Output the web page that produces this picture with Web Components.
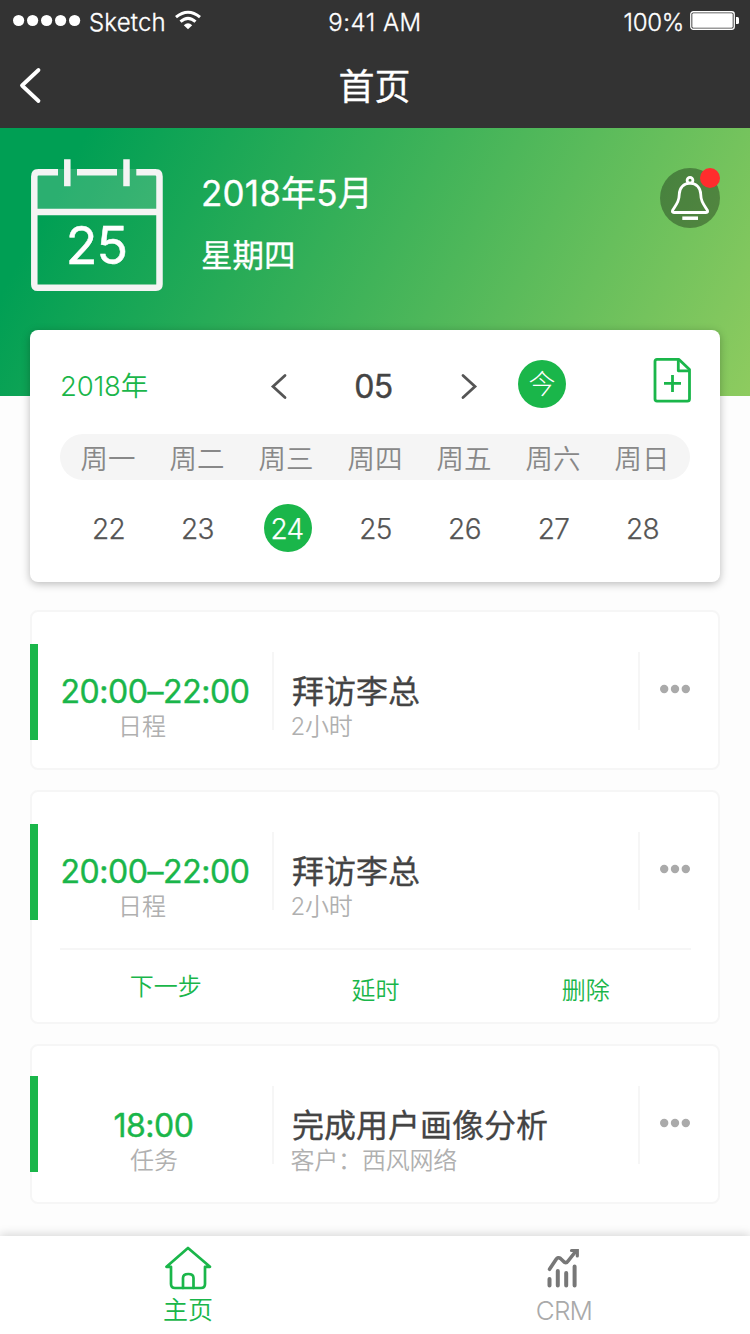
<!DOCTYPE html>
<html lang="zh-CN">
<head>
<meta charset="utf-8">
<title>首页</title>
<style>
  html, body { margin: 0; padding: 0; }
  body {
    width: 750px; height: 1334px; overflow: hidden; background: #fdfdfd;
    font-family: Inter, "Noto Sans CJK SC", sans-serif;
    font-feature-settings: "calt" 0;
    --green: #1ab64a; --line: #f6f6f6;
  }
</style>
</head>
<body>
<home-screen></home-screen>
<script>
const define = (name, html) => {
  const t = document.createElement('template');
  t.innerHTML = html;
  customElements.define(name, class extends HTMLElement {
    constructor() {
      super();
      this.attachShadow({ mode: 'open' }).append(t.content.cloneNode(true));
    }
  });
};

define('status-bar', `
<style>
  :host { display: grid; grid-template-columns: 1fr auto 1fr; height: 40px; background: #333; color: #fff; font-size: 24px; line-height: 46px; white-space: nowrap; font-weight: 300; -webkit-text-stroke: .3px; }
  .l { display: flex; padding-left: 13px; }
  .r { display: flex; justify-content: flex-end; padding-right: 11px; }
  svg { display: block; flex: none; }
  .dots { margin: 14px 8px 0 0; }
  .wifi { margin: 10px 0 0 9px; }
  .bat { margin: 11px 0 0 6px; }
  .name { letter-spacing: .2px; }
  .time { letter-spacing: .5px; }
  .pct { letter-spacing: -.3px; }
</style>
<div class="l">
  <svg class="dots" width="68" height="13" fill="#fff"><circle cx="5.600" cy="6.500" r="5.600"/><circle cx="19.600" cy="6.500" r="5.600"/><circle cx="33.600" cy="6.500" r="5.600"/><circle cx="47.600" cy="6.500" r="5.600"/><circle cx="61.600" cy="6.500" r="5.600"/></svg>
  <span class="name">Sketch</span>
  <svg class="wifi" width="27" height="20" fill="none" stroke="#fff" stroke-width="3"><path d="M1 7.200Q13 -2.800 25 7.200"/><path d="M5.500 11.700Q13 5 20.500 11.700"/><path d="M8.800 15.300Q13 11.300 17.200 15.300L13 19.200Z" fill="#fff" stroke="none"/></svg>
</div>
<span class="time">9:41 AM</span>
<div class="r">
  <span class="pct">100%</span>
  <svg class="bat" width="49" height="19"><rect x=".75" y=".75" width="43.500" height="17.500" rx="2.500" fill="none" stroke="#fff" stroke-width="1.300"/><rect x="2.300" y="2.300" width="40.400" height="14.400" rx="1.200" fill="#fff"/><path d="M46 6h1.500q1.500 0 1.500 1.500v4q0 1.500-1.500 1.500h-1.500z" fill="#fff"/></svg>
</div>`);

define('nav-bar', `
<style>
  :host { display: grid; grid-template-columns: 60px 1fr 60px; height: 88px; background: #333; color: #fff; }
  svg { display: block; margin: 27px 0 0 19px; }
  h1 { margin: 0 0 0 -1px; font-size: 36px; font-weight: 400; -webkit-text-stroke: .3px; line-height: 94px; height: 88px; text-align: center; }
</style>
<svg width="24" height="38" fill="none" stroke="#fff" stroke-width="3.800" stroke-linecap="round" stroke-linejoin="round"><path d="M19.500 3 3 18.500 19.500 34"/></svg>
<h1><slot></slot></h1>`);

define('date-hero', `
<style>
  :host { display: flex; box-sizing: border-box; height: 268px; padding: 31px 30px 0; color: #fff;
    background: linear-gradient(118deg, #009f54 10%, #8ecb5f 100%); }
  .cal { display: grid; width: 134px; height: 133px; }
  .cal > * { grid-area: 1 / 1; }
  .day { font-size: 52px; font-weight: 400; -webkit-text-stroke: .5px; line-height: 64px; padding: 55px 1px 0 0; text-align: center; letter-spacing: -1px; }
  .txt { margin-left: 37px; flex: 1; font-weight: 400; -webkit-text-stroke: .3px; white-space: nowrap; }
  .m { font-size: 35px; line-height: 44px; margin-top: 12px; letter-spacing: .2px; }
  .w { font-size: 31.500px; line-height: 40px; margin-top: 21px; }
  .bell { margin-top: 9px; }
</style>
<div class="cal">
  <svg width="134" height="133" fill="none" stroke="#f4f4f4" stroke-width="6.500"><path d="M4 10h126v43H4z" fill="#fff" fill-opacity=".17" stroke="none"/><path d="M28 13.300H8.500Q4.300 13.300 4.300 17.500V125.500Q4.300 128.800 7.600 128.800H126Q129.500 128.800 129.500 125.300V17.500Q129.500 13.300 125.300 13.300H106.300M47 13.300h40M4.300 53h125M37.300.200v27M96.500.200v27"/></svg>
  <div class="day">25</div>
</div>
<div class="txt"><div class="m">2018年5月</div><div class="w">星期四</div></div>
<svg class="bell" width="60" height="60" fill="none" stroke="#fff" stroke-width="2.800" stroke-linejoin="round"><circle cx="30" cy="30" r="30" fill="#000" fill-opacity=".32" stroke="none"/><circle cx="30" cy="12.300" r="2.900"/><path d="M30 15.200C23.500 15.200 19.500 20 19.300 26C19.100 33 17 35.500 12.800 42Q11.500 44.500 14 44.500H46Q48.500 44.500 47.200 42C43 35.500 40.900 33 40.700 26C40.500 20 36.500 15.200 30 15.200Z"/><path d="M22.300 50.200h15.700" stroke-width="3.500"/><circle cx="50" cy="10" r="10" fill="#ff2d2d" stroke="none"/></svg>`);

define('week-calendar', `
<style>
  :host { display: block; box-sizing: border-box; height: 252px; margin: -66px 30px 0; background: #fff; border-radius: 8px; box-shadow: 0 2px 9px rgba(0,0,0,.27); position: relative; padding: 0 30px; }
  .top { display: grid; grid-template-columns: 198px 58px 115px 73px 60px 1fr; height: 104px; }
  .top svg { display: block; }
  .y { font-size: 27.500px; font-weight: 350; color: var(--green); line-height: 112px; letter-spacing: -.2px; }
  .mo { font-size: 32px; font-weight: 400; -webkit-text-stroke: .4px; color: #444; line-height: 114px; text-align: center; letter-spacing: -.6px; }
  .now { width: 48px; height: 48px; border-radius: 50%; background: var(--green); color: #fff; font-size: 27px; font-weight: 300; line-height: 50px; text-align: center; margin: 30px 0 0 14px; }
  .doc { justify-self: end; margin: 28px -2px 0 0; }
  .row { display: grid; grid-template-columns: repeat(7, 89px); padding-left: 3.500px; text-align: center; font-weight: 350; font-size: 27.500px; white-space: nowrap; }
  .days { height: 46px; line-height: 50px; border-radius: 23px; background: #f5f5f5; color: #888; }
  .dates { margin-top: 24px; line-height: 50px; color: #555; font-size: 28px; font-weight: 300; -webkit-text-stroke: .25px; letter-spacing: -.6px; padding-left: 4px; }
  .on { width: 48px; height: 48px; border-radius: 50%; background: var(--green); color: #fff; justify-self: center; position: relative; left: 1.500px; box-sizing: border-box; padding-right: 2px; }
</style>
<div class="top">
  <span class="y">2018年</span>
  <svg width="40" height="104" fill="none" stroke="#555" stroke-width="2.800" stroke-linecap="round"><path d="M27 45.500 15 56.500 27 67.500"/></svg>
  <span class="mo">05</span>
  <svg width="60" height="104" fill="none" stroke="#555" stroke-width="2.800" stroke-linecap="round"><path d="M32 45.500 44 56.500 32 67.500"/></svg>
  <span class="now">今</span>
  <svg class="doc" width="40" height="46" fill="none" stroke="#1ab64a" stroke-width="2.800" stroke-linejoin="round"><path d="M5 1.400H27L37.500 11.500V41Q37.500 43.200 35.300 43.200H5Q3 43.200 3 41V3.400Q3 1.400 5 1.400Z"/><path d="M26.300 2v10.800H37.500M12 25.400h17M20.500 17v17"/></svg>
</div>
<div class="row days"><span>周一</span><span>周二</span><span>周三</span><span>周四</span><span>周五</span><span>周六</span><span>周日</span></div>
<div class="row dates"><span>22</span><span>23</span><span class="on">24</span><span>25</span><span>26</span><span>27</span><span>28</span></div>`);

define('agenda-card', `
<style>
  :host { display: block; box-sizing: border-box; margin: 0 30px; border: 2px solid var(--line); border-radius: 8px; background: #fff; white-space: nowrap; }
  .main { display: flex; height: 156px; }
  .bar { width: 8px; height: 96px; margin: var(--bar-top, 32px) 0 0 -2px; background: var(--green); flex: none; }
  .time { width: 234px; text-align: center; flex: none; }
  .t { font-size: 32px; line-height: 40px; font-weight: 400; -webkit-text-stroke: .4px; color: var(--green); margin-top: 60px; letter-spacing: -.45px; padding-right: var(--time-shift, 0); }
  .k, .s { font-size: 24px; line-height: 30px; font-weight: 350; color: #b0b0b0; }
  .k { padding-right: var(--kind-shift, 26px); }
  .info { flex: 1; padding-left: 17px; }
  .s { letter-spacing: -.2px; margin-left: -.5px; }
  .n { font-size: 32px; line-height: 40px; font-weight: 400; -webkit-text-stroke: .3px; color: #444; margin-top: 60px; padding-left: 1px; }
  .v { width: 2px; height: 78px; margin-top: 40px; background: var(--line); }
  svg { display: block; margin: 72px 27px 0 19px; }
</style>
<div class="main">
  <div class="bar"></div>
  <div class="time"><div class="t"><slot name="time"></slot></div><div class="k"><slot name="kind"></slot></div></div>
  <div class="v"></div>
  <div class="info"><div class="n"><slot name="title"></slot></div><div class="s"><slot name="note"></slot></div></div>
  <div class="v"></div>
  <svg width="32" height="10" fill="#aaa"><circle cx="5.200" cy="5" r="4.200"/><circle cx="16" cy="5" r="4.200"/><circle cx="26.800" cy="5" r="4.200"/></svg>
</div>
<slot name="actions"></slot>`);

define('card-actions', `
<style>
  :host { display: grid; grid-template-columns: repeat(3, 1fr); height: 74px; box-sizing: border-box; margin: 0 27px 0 28px; border-top: 2px solid var(--line); color: var(--green); font-size: 24px; font-weight: 350; line-height: 82px; text-align: center; }
  .up { line-height: 74px; padding-left: 1px; }
</style>
<span class="up">下一步</span><span>延时</span><span>删除</span>`);

define('tab-bar', `
<style>
  :host { display: grid; grid-template-columns: 1fr 1fr; height: 98px; background: #fff; box-shadow: 0 -2px 9px rgba(0,0,0,.15); position: relative; font-size: 25px; font-weight: 350; text-align: center; }
  svg { display: block; margin: 8px auto 0; }
  .a { color: var(--green); padding-left: 1px; line-height: 37px; }
  .b { color: #aaa; padding-left: 3px; font-size: 26px; letter-spacing: -.8px; line-height: 38px; font-weight: 300; }
  .b svg { stroke: #777; }
</style>
<div class="a"><svg width="50" height="48" fill="none" stroke="#1ab64a" stroke-width="2.700" stroke-linejoin="round" stroke-linecap="round"><path d="M25 4 3.500 22.800H8V40Q8 44 12 44H38Q42 44 42 40V22.800H47Z"/><path d="M20 44V34Q20 30 25.300 30Q30.500 30 30.500 34V44"/></svg>主页</div>
<div class="b"><svg width="40" height="48" fill="none" stroke-width="4" stroke-linecap="round"><path d="M5.500 41.500v-6.500M13.800 41.500v-14.500M22.200 41.500v-12.500M30.600 41.500v-19"/><path d="M5.500 25.300 12 15.500Q14 12.500 16.500 14.500L20.500 18.200Q22.500 19.500 24.500 16.500L32 7" stroke-width="3.600"/><path d="M27.500 6.500H33.300V12" stroke-width="3.200"/></svg>CRM</div>`);

define('home-screen', `
<style>
  :host { display: flex; flex-direction: column; height: 1334px; }
  .list { display: flex; flex-direction: column; gap: 20px; margin-top: 28px; flex: 1; }
  .last { --bar-top: 30px; --kind-shift: 2px; --time-shift: 3px; }
</style>
<status-bar></status-bar>
<nav-bar>首页</nav-bar>
<date-hero></date-hero>
<week-calendar></week-calendar>
<div class="list">
  <agenda-card><span slot="time">20:00–22:00</span><span slot="kind">日程</span><span slot="title">拜访李总</span><span slot="note">2小时</span></agenda-card>
  <agenda-card><span slot="time">20:00–22:00</span><span slot="kind">日程</span><span slot="title">拜访李总</span><span slot="note">2小时</span><card-actions slot="actions"></card-actions></agenda-card>
  <agenda-card class="last"><span slot="time">18:00</span><span slot="kind">任务</span><span slot="title">完成用户画像分析</span><span slot="note">客户：西风网络</span></agenda-card>
</div>
<tab-bar></tab-bar>`);
</script>
</body>
</html>
